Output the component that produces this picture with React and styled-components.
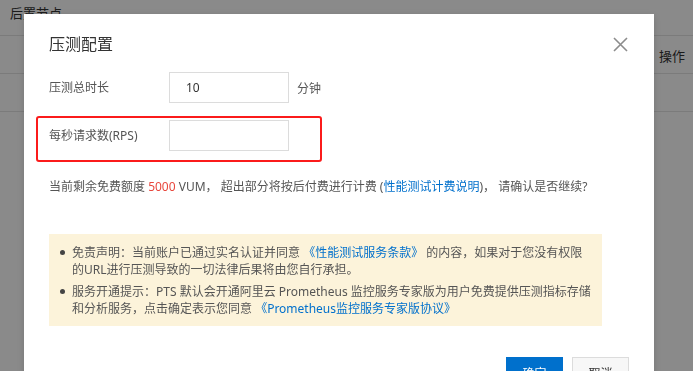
import React from 'react';
import styled, { createGlobalStyle } from 'styled-components';

const GlobalStyle = createGlobalStyle`
  html, body {
    margin: 0;
    padding: 0;
    width: 693px;
    height: 371px;
    overflow: hidden;
    background: #fff;
    font-family: "Noto Sans", "Noto Sans CJK SC", sans-serif;
  }
`;

const App = () => {
  return (
    <>
      <GlobalStyle />
      <Page>
        <PageHeader>后置节点</PageHeader>
        <TableRow>
          <span>操作</span>
        </TableRow>
        <TableRow />
      </Page>

      <Overlay>
        <Modal>
          <ModalHeader>
            <Title>压测配置</Title>
            <CloseButton aria-label="close">
              <svg width="15" height="15" viewBox="0 0 15 15">
                <path d="M1 1 L14 14 M14 1 L1 14" stroke="#8c8c8c" strokeWidth="1.6" fill="none" />
              </svg>
            </CloseButton>
          </ModalHeader>

          <Form>
            <FormRow>
              <Label>压测总时长</Label>
              <Input defaultValue="10" />
              <Unit>分钟</Unit>
            </FormRow>
            <FormRow highlighted>
              <Label>每秒请求数(RPS)</Label>
              <Input defaultValue="" />
            </FormRow>
          </Form>

          <Info>
            当前剩余免费额度 <Red>5000</Red> VUM， 超出部分将按后付费进行计费 (<Link>性能测试计费说明</Link>)， 请确认是否继续?
          </Info>

          <Notice>
            <li>
              免责声明：当前账户已通过实名认证并同意 <Link>《性能测试服务条款》</Link> 的内容，如果对于您没有权限<br />
              的URL进行压测导致的一切法律后果将由您自行承担。
            </li>
            <li>
              服务开通提示：PTS 默认会开通阿里云 Prometheus 监控服务专家版为用户免费提供压测指标存储<br />
              和分析服务，点击确定表示您同意 <Link>《Prometheus监控服务专家版协议》</Link>
            </li>
          </Notice>

          <Footer>
            <Button primary>确定</Button>
            <Button>取消</Button>
          </Footer>
        </Modal>
      </Overlay>
    </>
  );
};

export default App;

const Page = styled.div`
  width: 693px;
  height: 371px;
  background: #fff;
  color: #333;
  font-size: 13px;
`;

const PageHeader = styled.div`
  height: 36px;
  padding: 4px 0 0 10px;
  box-sizing: border-box;
  line-height: 18px;
  border-bottom: 1px solid #e4e4e4;
`;

const TableRow = styled.div`
  height: 37px;
  display: flex;
  align-items: center;
  justify-content: flex-end;
  padding-right: 8px;
  border-bottom: 1px solid #e4e4e4;
  span {
    padding-top: 1px;
  }
`;

const Overlay = styled.div`
  position: fixed;
  inset: 0;
  background: rgba(0, 0, 0, 0.46);
  padding: 14px 0 0 24px;
`;

const Modal = styled.div`
  width: 630px;
  height: 400px;
  box-sizing: border-box;
  background: #fff;
  padding: 20px 25px 0 25px;
  box-shadow: 0 2px 8px rgba(0, 0, 0, 0.15);
  color: #555;
  font-size: 12px;
`;

const ModalHeader = styled.div`
  display: flex;
  justify-content: space-between;
  align-items: center;
  height: 20px;
`;

const Title = styled.div`
  font-size: 16px;
  line-height: 20px;
  color: #333;
`;

const CloseButton = styled.button`
  border: 0;
  background: none;
  padding: 0;
  margin-right: 1px;
  width: 15px;
  height: 15px;
  display: flex;
  cursor: pointer;
`;

const Form = styled.div`
  margin-top: 18px;
  display: flex;
  flex-direction: column;
  gap: 17px;
`;

const FormRow = styled.div`
  position: relative;
  display: flex;
  align-items: center;
  height: 31px;

  ${({ highlighted }) => highlighted && `
    &::after {
      content: '';
      position: absolute;
      left: -13px;
      top: -4px;
      width: 282px;
      height: 42px;
      border: 2px solid #fb1b1b;
      border-radius: 3px;
      pointer-events: none;
    }
  `}
`;

const Label = styled.div`
  width: 120px;
  line-height: 18px;
  color: #555;
`;

const Input = styled.input`
  width: 120px;
  height: 31px;
  box-sizing: border-box;
  border: 1px solid #dcdcdc;
  padding: 0 16px;
  font-family: inherit;
  font-size: 12px;
  color: #333;
  outline: none;
`;

const Unit = styled.span`
  margin-left: 8px;
  color: #555;
`;

const Info = styled.div`
  margin-top: 27px;
  line-height: 18px;
  color: #555;
  white-space: nowrap;
`;

const Red = styled.span`
  color: #e8473d;
`;

const Link = styled.span`
  color: #0070cc;
`;

const Notice = styled.ul`
  margin: 38px 0 0 0;
  width: 553px;
  box-sizing: border-box;
  background: #fcf3da;
  padding: 10px 8px 9px 23px;
  list-style: none;
  color: #555;
  line-height: 17px;

  li {
    position: relative;
    white-space: nowrap;
  }
  li + li {
    margin-top: 5px;
  }
  li::before {
    content: '';
    position: absolute;
    left: -12px;
    top: 6px;
    width: 5px;
    height: 5px;
    border-radius: 50%;
    background: #444;
  }
`;

const Footer = styled.div`
  margin-top: 31px;
  display: flex;
  justify-content: flex-end;
  gap: 9px;
`;

const Button = styled.button`
  width: 57px;
  height: 32px;
  box-sizing: border-box;
  border: 1px solid ${({ primary }) => (primary ? '#0070cc' : '#dcdcdc')};
  background: ${({ primary }) => (primary ? '#0070cc' : '#f7f7f7')};
  color: ${({ primary }) => (primary ? '#fff' : '#333')};
  font-family: inherit;
  font-size: 12px;
  padding: 0;
  cursor: pointer;
`;
